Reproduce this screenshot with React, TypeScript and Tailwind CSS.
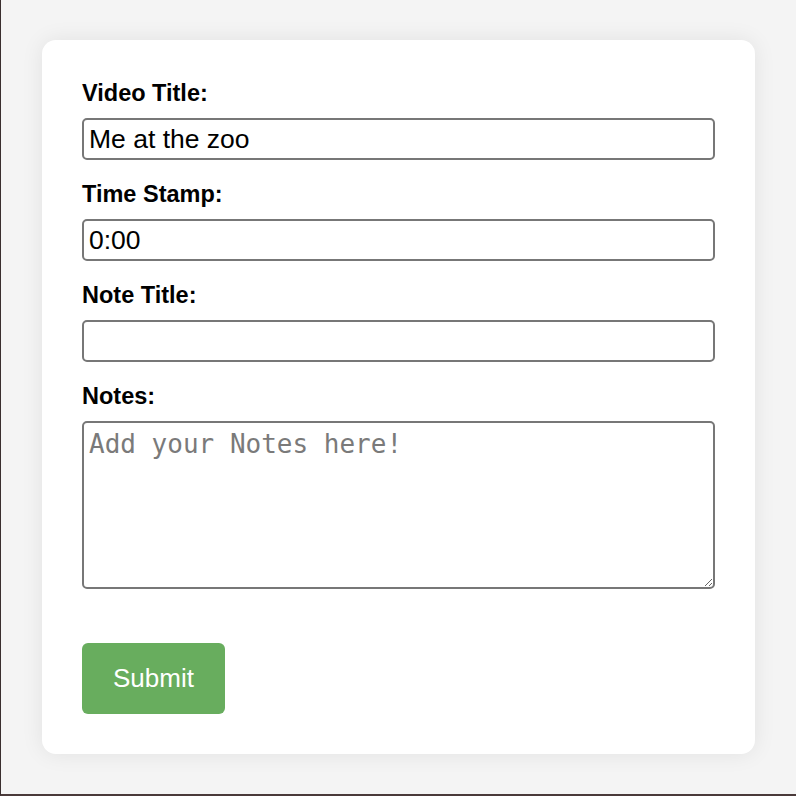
import { useState } from "react";

export default function App() {
  const [videoTitle, setVideoTitle] = useState("Me at the zoo");
  const [timeStamp, setTimeStamp] = useState("0:00");
  const [noteTitle, setNoteTitle] = useState("");
  const [notes, setNotes] = useState("");

  const labelCls = "block text-[23.5px] font-bold leading-[27px] mb-[11px] text-black";
  const inputCls =
    "block w-full h-[42px] border-2 border-[#777777] rounded-[5px] px-[5px] text-[26.5px] text-black bg-white outline-none mb-[21px]";

  return (
    <div
      className="h-screen bg-[#f4f4f4] pt-[40px] border-l border-l-[#3a2e2e] border-b-2 border-b-[#4a3a3a]"
      style={{ fontFamily: '"Liberation Sans", Arial, sans-serif' }}
    >
      <form
        onSubmit={(e) => e.preventDefault()}
        className="ml-[41px] w-[713px] bg-white rounded-[14px] shadow-[0_0_22px_rgba(0,0,0,0.08)] px-[40px] pt-[40px] pb-[40px]"
      >
        <label className={labelCls}>Video Title:</label>
        <input
          className={inputCls}
          value={videoTitle}
          onChange={(e) => setVideoTitle(e.target.value)}
        />

        <label className={labelCls}>Time Stamp:</label>
        <input
          className={inputCls}
          value={timeStamp}
          onChange={(e) => setTimeStamp(e.target.value)}
        />

        <label className={labelCls}>Note Title:</label>
        <input
          className={inputCls}
          value={noteTitle}
          onChange={(e) => setNoteTitle(e.target.value)}
        />

        <label className={labelCls}>Notes:</label>
        <textarea
          className="block w-full h-[168px] border-2 border-[#777777] rounded-[5px] px-[5px] py-[2px] text-[26px] text-black bg-white outline-none placeholder:text-[#7a7a7a]"
          style={{ fontFamily: '"DejaVu Sans Mono", "Liberation Mono", monospace' }}
          placeholder="Add your Notes here!"
          value={notes}
          onChange={(e) => setNotes(e.target.value)}
        />

        <button
          type="submit"
          className="mt-[54px] w-[143px] h-[71px] bg-[#68ad5e] text-white text-[26px] rounded-[6px]"
        >
          Submit
        </button>
      </form>
    </div>
  );
}
